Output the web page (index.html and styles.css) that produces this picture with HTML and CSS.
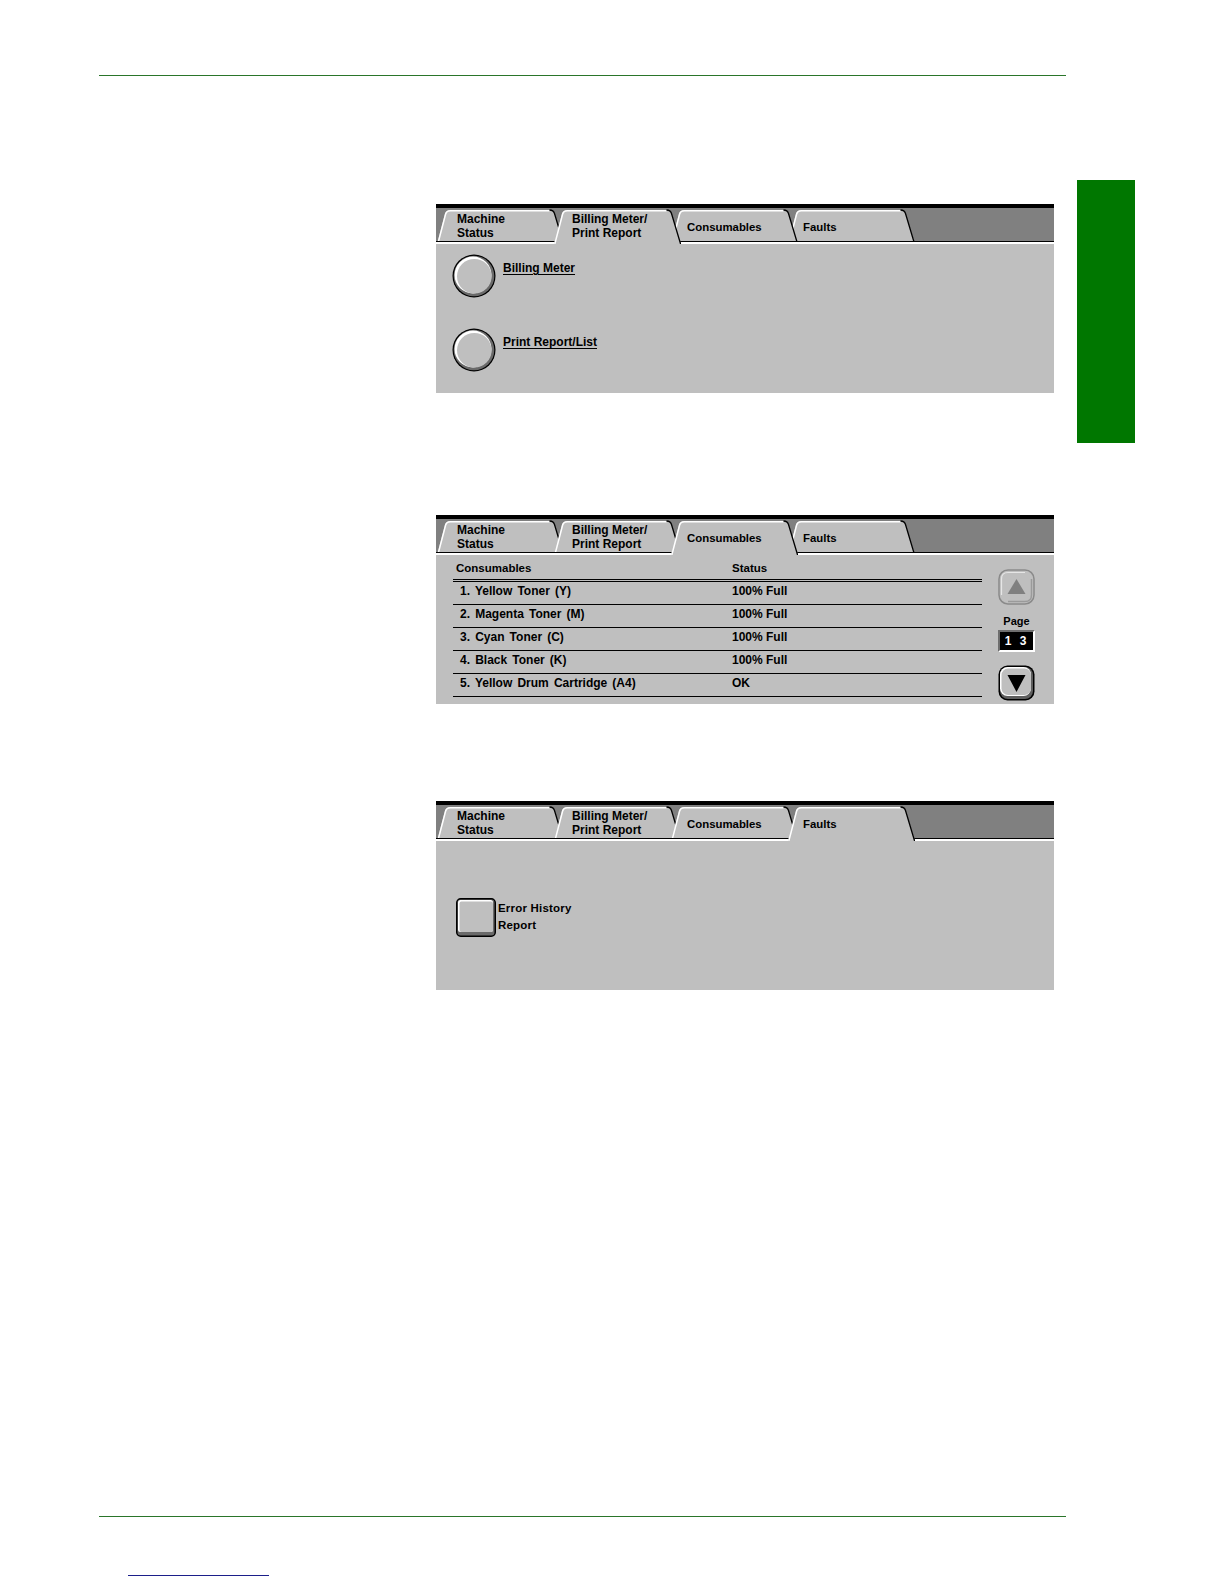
FILE: index.html
```html
<!DOCTYPE html>
<html lang="en">
<head>
<meta charset="utf-8">
<title>Machine Status screens</title>
<link rel="stylesheet" href="styles.css">
</head>
<body>
<div class="page">
  <div class="rule"></div>

  <div class="content">
    <div class="panels">

      <!-- Panel 1: Billing Meter / Print Report -->
      <div class="panel">
        <div class="tabstrip">
          <div class="tab tab-ms z2">
            <svg viewBox="0 0 127 35" width="127" height="35"><path d="M0,35 L8,4.5 Q9,1 13,1 L113,1 Q116.5,1 117.5,4.5 L127,35 Z" fill="#bfbfbf"/><path d="M0.8,35 L8.7,4.8 Q9.7,1.8 13.3,1.8 L112.5,1.8" fill="none" stroke="#fff" stroke-width="1.5"/><path d="M112.5,1 Q116.5,1 117.5,4.5 L126.6,35" fill="none" stroke="#000" stroke-width="1.3"/></svg>
            <span class="tab-label">Machine<br>Status</span>
          </div>
          <div class="tab tab-bm active">
            <svg viewBox="0 0 127 35" width="127" height="35"><path d="M0,35 L8,4.5 Q9,1 13,1 L113,1 Q116.5,1 117.5,4.5 L127,35 Z" fill="#bfbfbf"/><path d="M0.8,35 L8.7,4.8 Q9.7,1.8 13.3,1.8 L112.5,1.8" fill="none" stroke="#fff" stroke-width="1.5"/><path d="M112.5,1 Q116.5,1 117.5,4.5 L126.6,35" fill="none" stroke="#000" stroke-width="1.3"/></svg>
            <span class="tab-label">Billing Meter/<br>Print Report</span>
          </div>
          <div class="tab tab-co single z2">
            <svg viewBox="0 0 127 35" width="127" height="35"><path d="M0,35 L8,4.5 Q9,1 13,1 L113,1 Q116.5,1 117.5,4.5 L127,35 Z" fill="#bfbfbf"/><path d="M0.8,35 L8.7,4.8 Q9.7,1.8 13.3,1.8 L112.5,1.8" fill="none" stroke="#fff" stroke-width="1.5"/><path d="M112.5,1 Q116.5,1 117.5,4.5 L126.6,35" fill="none" stroke="#000" stroke-width="1.3"/></svg>
            <span class="tab-label">Consumables</span>
          </div>
          <div class="tab tab-fa single z1">
            <svg viewBox="0 0 127 35" width="127" height="35"><path d="M0,35 L8,4.5 Q9,1 13,1 L113,1 Q116.5,1 117.5,4.5 L127,35 Z" fill="#bfbfbf"/><path d="M0.8,35 L8.7,4.8 Q9.7,1.8 13.3,1.8 L112.5,1.8" fill="none" stroke="#fff" stroke-width="1.5"/><path d="M112.5,1 Q116.5,1 117.5,4.5 L126.6,35" fill="none" stroke="#000" stroke-width="1.3"/></svg>
            <span class="tab-label">Faults</span>
          </div>
        </div>
        <div class="panel-body body-options">
          <div class="option">
            <svg class="round-btn" viewBox="0 0 44 44" width="44" height="44"><circle cx="22" cy="22" r="21.5" fill="#000"/><circle cx="22" cy="22" r="20.3" fill="#6a6a6a"/><circle cx="21" cy="21" r="18.5" fill="#fff"/><circle cx="22.3" cy="22.3" r="17.3" fill="#bfbfbf"/></svg>
            <span class="option-label link">Billing Meter</span>
          </div>
          <div class="option">
            <svg class="round-btn" viewBox="0 0 44 44" width="44" height="44"><circle cx="22" cy="22" r="21.5" fill="#000"/><circle cx="22" cy="22" r="20.3" fill="#6a6a6a"/><circle cx="21" cy="21" r="18.5" fill="#fff"/><circle cx="22.3" cy="22.3" r="17.3" fill="#bfbfbf"/></svg>
            <span class="option-label link">Print Report/List</span>
          </div>
        </div>
      </div>

      <!-- Panel 2: Consumables -->
      <div class="panel panel-2">
        <div class="tabstrip">
          <div class="tab tab-ms z1">
            <svg viewBox="0 0 127 35" width="127" height="35"><path d="M0,35 L8,4.5 Q9,1 13,1 L113,1 Q116.5,1 117.5,4.5 L127,35 Z" fill="#bfbfbf"/><path d="M0.8,35 L8.7,4.8 Q9.7,1.8 13.3,1.8 L112.5,1.8" fill="none" stroke="#fff" stroke-width="1.5"/><path d="M112.5,1 Q116.5,1 117.5,4.5 L126.6,35" fill="none" stroke="#000" stroke-width="1.3"/></svg>
            <span class="tab-label">Machine<br>Status</span>
          </div>
          <div class="tab tab-bm z2">
            <svg viewBox="0 0 127 35" width="127" height="35"><path d="M0,35 L8,4.5 Q9,1 13,1 L113,1 Q116.5,1 117.5,4.5 L127,35 Z" fill="#bfbfbf"/><path d="M0.8,35 L8.7,4.8 Q9.7,1.8 13.3,1.8 L112.5,1.8" fill="none" stroke="#fff" stroke-width="1.5"/><path d="M112.5,1 Q116.5,1 117.5,4.5 L126.6,35" fill="none" stroke="#000" stroke-width="1.3"/></svg>
            <span class="tab-label">Billing Meter/<br>Print Report</span>
          </div>
          <div class="tab tab-co single active">
            <svg viewBox="0 0 127 35" width="127" height="35"><path d="M0,35 L8,4.5 Q9,1 13,1 L113,1 Q116.5,1 117.5,4.5 L127,35 Z" fill="#bfbfbf"/><path d="M0.8,35 L8.7,4.8 Q9.7,1.8 13.3,1.8 L112.5,1.8" fill="none" stroke="#fff" stroke-width="1.5"/><path d="M112.5,1 Q116.5,1 117.5,4.5 L126.6,35" fill="none" stroke="#000" stroke-width="1.3"/></svg>
            <span class="tab-label">Consumables</span>
          </div>
          <div class="tab tab-fa single z2">
            <svg viewBox="0 0 127 35" width="127" height="35"><path d="M0,35 L8,4.5 Q9,1 13,1 L113,1 Q116.5,1 117.5,4.5 L127,35 Z" fill="#bfbfbf"/><path d="M0.8,35 L8.7,4.8 Q9.7,1.8 13.3,1.8 L112.5,1.8" fill="none" stroke="#fff" stroke-width="1.5"/><path d="M112.5,1 Q116.5,1 117.5,4.5 L126.6,35" fill="none" stroke="#000" stroke-width="1.3"/></svg>
            <span class="tab-label">Faults</span>
          </div>
        </div>
        <div class="panel-body body-table">
          <div class="table">
            <div class="thead">
              <span>Consumables</span>
              <span>Status</span>
            </div>
            <div class="trow"><span class="item">1. Yellow Toner (Y)</span><span>100% Full</span></div>
            <div class="trow"><span class="item">2. Magenta Toner (M)</span><span>100% Full</span></div>
            <div class="trow"><span class="item">3. Cyan Toner (C)</span><span>100% Full</span></div>
            <div class="trow"><span class="item">4. Black Toner (K)</span><span>100% Full</span></div>
            <div class="trow"><span class="item">5. Yellow Drum Cartridge (A4)</span><span>OK</span></div>
          </div>
          <div class="controls">
            <svg class="scroll-btn" viewBox="0 0 37 36" width="37" height="36"><rect x="1" y="1" width="35" height="34" rx="9" fill="#bfbfbf" stroke="#8a8a8a" stroke-width="1.5"/><path d="M3.5,26 V10 Q3.5,3.5 10,3.5 H27" fill="none" stroke="#e6e6e6" stroke-width="1.2"/><path d="M33.5,10 V26 Q33.5,32.5 27,32.5 H10" fill="none" stroke="#9a9a9a" stroke-width="1.5"/><polygon points="18.5,10 27.5,25 9.5,25" fill="#808080"/></svg>
            <span class="page-label">Page</span>
            <span class="page-box">1 3</span>
            <svg class="scroll-btn down-btn" viewBox="0 0 37 36" width="37" height="36"><rect x="0.5" y="0.5" width="36" height="35" rx="9" fill="#000"/><rect x="2" y="2" width="33" height="32" rx="8" fill="#5e5e5e"/><rect x="2" y="2" width="31" height="29" rx="7.5" fill="#fff"/><rect x="3.5" y="3.5" width="29.5" height="26.5" rx="6.5" fill="#bfbfbf"/><polygon points="9.5,10 27.5,10 18.5,27" fill="#000"/></svg>
          </div>
        </div>
      </div>

      <!-- Panel 3: Faults -->
      <div class="panel panel-3">
        <div class="tabstrip">
          <div class="tab tab-ms z1">
            <svg viewBox="0 0 127 35" width="127" height="35"><path d="M0,35 L8,4.5 Q9,1 13,1 L113,1 Q116.5,1 117.5,4.5 L127,35 Z" fill="#bfbfbf"/><path d="M0.8,35 L8.7,4.8 Q9.7,1.8 13.3,1.8 L112.5,1.8" fill="none" stroke="#fff" stroke-width="1.5"/><path d="M112.5,1 Q116.5,1 117.5,4.5 L126.6,35" fill="none" stroke="#000" stroke-width="1.3"/></svg>
            <span class="tab-label">Machine<br>Status</span>
          </div>
          <div class="tab tab-bm z2">
            <svg viewBox="0 0 127 35" width="127" height="35"><path d="M0,35 L8,4.5 Q9,1 13,1 L113,1 Q116.5,1 117.5,4.5 L127,35 Z" fill="#bfbfbf"/><path d="M0.8,35 L8.7,4.8 Q9.7,1.8 13.3,1.8 L112.5,1.8" fill="none" stroke="#fff" stroke-width="1.5"/><path d="M112.5,1 Q116.5,1 117.5,4.5 L126.6,35" fill="none" stroke="#000" stroke-width="1.3"/></svg>
            <span class="tab-label">Billing Meter/<br>Print Report</span>
          </div>
          <div class="tab tab-co single z3">
            <svg viewBox="0 0 127 35" width="127" height="35"><path d="M0,35 L8,4.5 Q9,1 13,1 L113,1 Q116.5,1 117.5,4.5 L127,35 Z" fill="#bfbfbf"/><path d="M0.8,35 L8.7,4.8 Q9.7,1.8 13.3,1.8 L112.5,1.8" fill="none" stroke="#fff" stroke-width="1.5"/><path d="M112.5,1 Q116.5,1 117.5,4.5 L126.6,35" fill="none" stroke="#000" stroke-width="1.3"/></svg>
            <span class="tab-label">Consumables</span>
          </div>
          <div class="tab tab-fa single active">
            <svg viewBox="0 0 127 35" width="127" height="35"><path d="M0,35 L8,4.5 Q9,1 13,1 L113,1 Q116.5,1 117.5,4.5 L127,35 Z" fill="#bfbfbf"/><path d="M0.8,35 L8.7,4.8 Q9.7,1.8 13.3,1.8 L112.5,1.8" fill="none" stroke="#fff" stroke-width="1.5"/><path d="M112.5,1 Q116.5,1 117.5,4.5 L126.6,35" fill="none" stroke="#000" stroke-width="1.3"/></svg>
            <span class="tab-label">Faults</span>
          </div>
        </div>
        <div class="panel-body body-faults">
          <div class="option option-square">
            <svg class="square-btn" viewBox="0 0 40 39" width="40" height="39"><rect x="0.75" y="0.75" width="38.5" height="37.5" rx="4" fill="#6a6a6a" stroke="#000" stroke-width="1.5"/><rect x="2" y="2" width="35" height="32" rx="2.5" fill="#fff"/><rect x="3.5" y="3.5" width="33.5" height="30.5" rx="2" fill="#bfbfbf"/></svg>
            <span class="option-label plain">Error History<br>Report</span>
          </div>
        </div>
      </div>

    </div>
    <div class="side-tab"></div>
  </div>

  <div class="rule rule-bottom"></div>
  <div class="footer-link"></div>
</div>
</body>
</html>
```

FILE: styles.css
```css
* {
  box-sizing: border-box;
}

body {
  margin: 0;
  background: #ffffff;
  font-family: "Liberation Sans", Arial, sans-serif;
  color: #000;
}

.page {
  width: 1224px;
  height: 1584px;
  padding-top: 75px;
  overflow: hidden;
}

.rule {
  width: 967px;
  height: 1px;
  margin-left: 99px;
  background: #2a752a;
}

.rule-bottom {
  margin-top: 526px;
}

.footer-link {
  width: 141px;
  height: 1px;
  margin: 58px 0 0 128px;
  background: #1c1f8a;
}

.content {
  display: flex;
  align-items: flex-start;
  margin-top: 104px;
}

.panels {
  width: 618px;
  margin: 24px 0 0 436px;
  display: flex;
  flex-direction: column;
}

.side-tab {
  width: 58px;
  height: 263px;
  margin-left: 23px;
  background: #007700;
}

/* ---------- panel ---------- */
.panel {
  width: 618px;
  height: 189px;
  border-top: 4px solid #000;
  background: #bfbfbf;
  display: flex;
  flex-direction: column;
}

.panel-2 {
  margin-top: 122px;
}

.panel-3 {
  margin-top: 97px;
}

.tabstrip {
  position: relative;
  flex-shrink: 0;
  height: 36px;
  padding: 1px 0 0 1px;
  display: flex;
  background: #808080;
}

.tabstrip::after {
  content: "";
  position: absolute;
  left: 0;
  right: 0;
  bottom: 0;
  height: 2px;
  border-top: 1px solid #000;
  background: #ffffff;
  z-index: 5;
}

.tab {
  position: relative;
  flex-shrink: 0;
  width: 127px;
  height: 35px;
  margin-right: -10px;
  font-size: 12px;
  font-weight: bold;
  line-height: 14.5px;
  white-space: nowrap;
}

.tab svg {
  position: absolute;
  left: 0;
  top: 0;
  display: block;
}

.tab-label {
  position: relative;
  display: block;
  padding-top: 2.5px;
}

.tab.single .tab-label {
  padding-top: 11px;
  font-size: 11.4px;
}

.tab-ms .tab-label { padding-left: 20px; }
.tab-bm .tab-label { padding-left: 18px; }
.tab-co .tab-label { padding-left: 16px; }
.tab-fa .tab-label { padding-left: 15px; }

.z1 { z-index: 1; }
.z2 { z-index: 2; }
.z3 { z-index: 3; }
.active { z-index: 10; }

.panel-body {
  flex: 1;
}

/* ---------- panel 1 ---------- */
.body-options {
  display: flex;
  flex-direction: column;
  gap: 30px;
  padding: 10px 0 0 16px;
}

.option {
  display: flex;
  align-items: flex-start;
  gap: 7px;
}

.round-btn,
.square-btn,
.scroll-btn {
  display: block;
  flex-shrink: 0;
}

.option-label {
  font-size: 12px;
  font-weight: bold;
  line-height: 14px;
  white-space: nowrap;
}

.option-label.link {
  margin-top: 7px;
  text-decoration: underline;
  text-underline-offset: 2px;
}

/* ---------- panel 3 ---------- */
.body-faults {
  padding: 57px 0 0 20px;
}

.option-square {
  gap: 2px;
}

.option-label.plain {
  margin-top: 2px;
  font-size: 11.5px;
  line-height: 17px;
  letter-spacing: 0.2px;
}

/* ---------- panel 2 ---------- */
.body-table {
  display: flex;
  align-items: flex-start;
  padding: 6px 0 0 17px;
}

.table {
  width: 529px;
  font-size: 12px;
  font-weight: bold;
  line-height: 14px;
  white-space: nowrap;
}

.thead {
  display: grid;
  grid-template-columns: 276px 1fr;
  padding: 0 0 4px 3px;
  border-bottom: 3px double #000;
  font-size: 11.5px;
}

.trow {
  display: grid;
  grid-template-columns: 272px 1fr;
  height: 23px;
  padding: 2px 0 0 7px;
  border-bottom: 1px solid #000;
}

.item {
  word-spacing: 1.8px;
}

.controls {
  width: 37px;
  margin: 8px 0 0 16px;
  display: flex;
  flex-direction: column;
  align-items: center;
}

.page-label {
  margin-top: 10px;
  font-size: 11px;
  font-weight: bold;
  line-height: 13px;
}

.page-box {
  width: 37px;
  height: 22px;
  margin-top: 2px;
  border: 2px solid;
  border-color: #6e6e6e #ffffff #ffffff #6e6e6e;
  background: #000;
  color: #fff;
  font-size: 12px;
  font-weight: bold;
  line-height: 18px;
  text-align: center;
  letter-spacing: 2px;
  word-spacing: 1px;
}

.down-btn {
  margin-top: 13px;
}
```
